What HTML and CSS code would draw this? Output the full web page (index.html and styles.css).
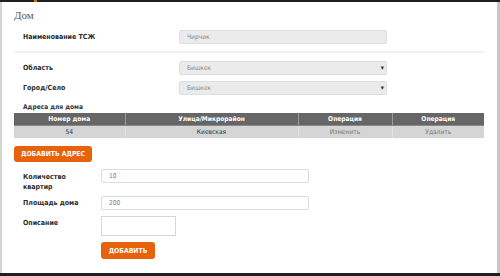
FILE: index.html
```html
<!DOCTYPE html>
<html lang="ru">
<head>
<meta charset="utf-8">
<title>Дом</title>
<link rel="stylesheet" href="styles.css">
</head>
<body>
<div class="topbar"><span class="marker"></span></div>
<div class="frame">
  <div class="left-strip"></div>
  <main class="content">
    <h1 class="title">Дом</h1>
    <div class="row wide r-name">
      <label class="lbl">Наименование ТСЖ</label>
      <div class="field filled">Чирчик</div>
    </div>
    <hr class="sep">
    <div class="row wide r-region">
      <label class="lbl">Область</label>
      <div class="field filled select">Бишкек<span class="arrow">▾</span></div>
    </div>
    <div class="row wide r-city">
      <label class="lbl">Город/Село</label>
      <div class="field filled select">Бишкек<span class="arrow">▾</span></div>
    </div>
    <div class="sub">Адреса для дома</div>
    <table class="addr">
      <thead>
        <tr><th class="c1">Номер дома</th><th class="c2">Улица/Микрорайон</th><th class="c3">Операция</th><th class="c4">Операция</th></tr>
      </thead>
      <tbody>
        <tr><td>54</td><td>Киевская</td><td class="op">Изменить</td><td class="op">Удалить</td></tr>
      </tbody>
    </table>
    <button class="btn btn-addr">ДОБАВИТЬ АДРЕС</button>
    <div class="row narrow r-flats">
      <label class="lbl two">Количество<br>квартир</label>
      <div class="field plain">10</div>
    </div>
    <div class="row narrow r-area">
      <label class="lbl">Площадь дома</label>
      <div class="field plain">200</div>
    </div>
    <div class="row narrow r-desc">
      <label class="lbl top">Описание</label>
      <div class="area"></div>
    </div>
    <div class="row narrow r-submit">
      <span></span>
      <button class="btn btn-add">ДОБАВИТЬ</button>
    </div>
  </main>
  <div class="right-strip"></div>
</div>
<div class="bottombar"></div>
</body>
</html>
```
FILE: styles.css
```css
* { box-sizing: border-box; }
html, body { margin: 0; padding: 0; background: #fff; }
body {
  width: 500px;
  height: 276px;
  overflow: hidden;
  font-family: "DejaVu Sans Condensed", "DejaVu Sans", Verdana, sans-serif;
  font-size: 7px;
  color: #333;
  display: flex;
  flex-direction: column;
}
.topbar {
  height: 2px;
  background: #1f1f1f;
  display: flex;
}
.marker {
  width: 3px;
  height: 2px;
  margin-left: 34px;
  background: #c87a10;
}
.frame {
  flex: 1;
  display: flex;
}
.left-strip { width: 2px; background: #d4d4d4; }
.right-strip { width: 3px; background: #c8c8c8; margin-left: auto; }
.bottombar { height: 3px; background: #1f1f1f; }
.content {
  width: 471px;
  margin-left: 12px;
  display: flex;
  flex-direction: column;
}
.title {
  margin: 7px 0 0 0;
  font-family: "Liberation Serif", "Times New Roman", serif;
  font-weight: normal;
  font-size: 11px;
  line-height: 13px;
  color: #5a5a5a;
}
.row {
  display: grid;
  align-items: center;
}
.row.wide { grid-template-columns: 165px 208px; }
.row.narrow { grid-template-columns: 87px 208px; }
.lbl {
  padding-left: 9px;
  font-weight: bold;
  font-size: 7px;
  line-height: 10px;
  color: #2b2b2b;
}
.lbl.top { align-self: start; padding-top: 2px; }
.field {
  height: 14px;
  border-radius: 2px;
  padding: 0 7px;
  font-size: 6.6px;
  line-height: 12px;
  color: #8a8a8a;
  position: relative;
}
.field.filled { background: #ebebeb; border: 1px solid #dedede; }
.field.plain { background: #fff; border: 1px solid #dcdcdc; color: #777; }
.arrow {
  position: absolute;
  right: 2px;
  top: 0;
  font-size: 7px;
  color: #333;
}
.r-name { margin-top: 8px; }
.sep {
  margin: 7px 0 0 0;
  border: 0;
  height: 2px;
  background: #f2f2f2;
  width: 471px;
}
.r-region { margin-top: 8px; }
.r-city { margin-top: 6px; }
.sub {
  margin-top: 8px;
  padding-left: 9px;
  font-weight: bold;
  font-size: 6.6px;
  line-height: 8px;
  color: #2e3440;
}
.addr {
  margin-top: 2px;
  width: 470px;
  border-collapse: collapse;
  table-layout: fixed;
  font-size: 6.6px;
}
.addr th {
  background: #666;
  color: #fff;
  font-weight: bold;
  height: 12px;
  padding: 0;
  border-left: 1px solid #9a9a9a;
  border-bottom: 1px solid #888;
}
.addr th:first-child { border-left: 0; }
.addr .c1 { width: 111px; }
.addr .c2 { width: 173px; }
.addr .c3 { width: 94px; }
.addr td {
  background: #d5d5d5;
  height: 13px;
  padding: 0;
  text-align: center;
  color: #333;
  border-left: 1px solid #e2e2e2;
}
.addr td:first-child { border-left: 0; }
.addr td.op { color: #777; }
.btn {
  border: 0;
  border-radius: 3px;
  background: #e8620b;
  color: #fff;
  font-family: "DejaVu Sans Condensed", "DejaVu Sans", Verdana, sans-serif;
  font-weight: bold;
  font-size: 6.8px;
  padding: 0;
  cursor: pointer;
}
.btn-addr {
  margin-top: 8px;
  width: 78px;
  height: 16px;
  align-self: flex-start;
}
.r-flats { margin-top: 7px; align-items: start; }
.r-flats .lbl { padding-top: 3px; }
.r-area { margin-top: 4px; }
.r-desc { margin-top: 6px; }
.area {
  width: 75px;
  height: 20px;
  border: 1px solid #d6d6d6;
  background: #fff;
}
.r-submit { margin-top: 6px; }
.btn-add {
  width: 54px;
  height: 17px;
}
```
